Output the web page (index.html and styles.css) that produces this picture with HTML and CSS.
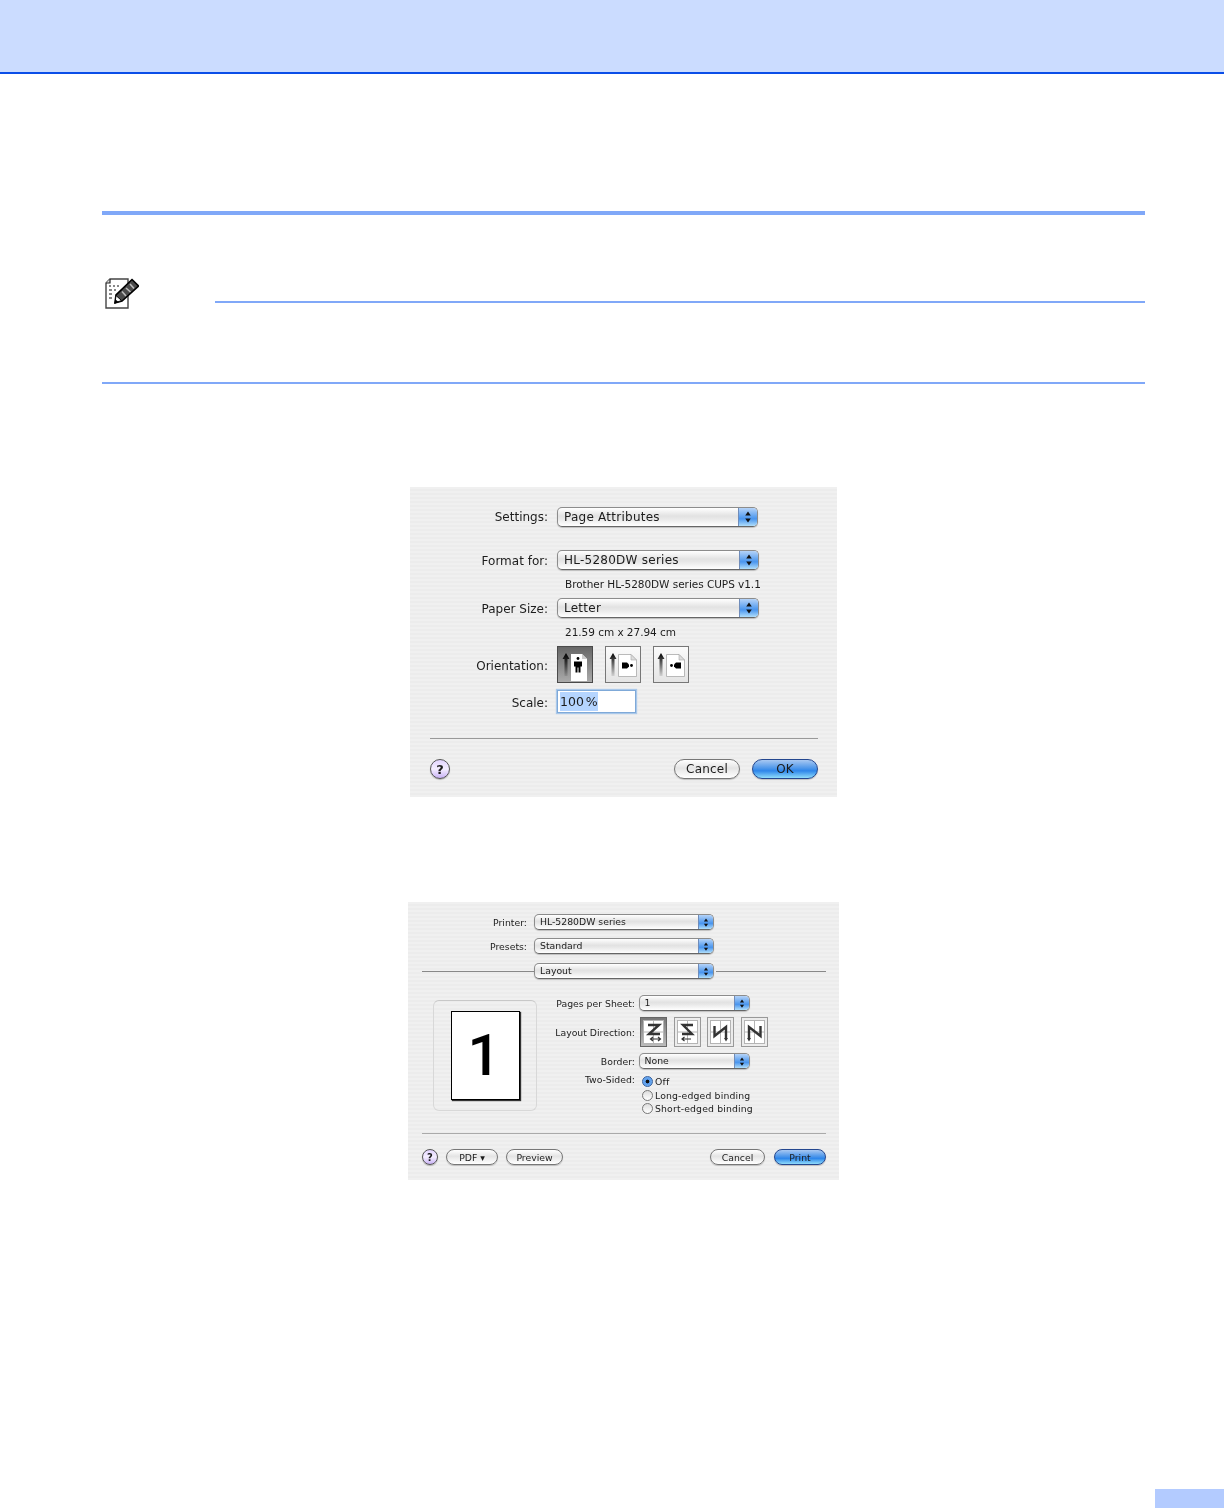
FILE: index.html
```html
<!DOCTYPE html>
<html lang="en">
<head>
  <meta charset="UTF-8" />
  <title>Page Setup and Print</title>
  <link rel="stylesheet" href="styles.css">
</head>
<body>
  <svg class="defs" width="0" height="0">
    <defs>
      <linearGradient id="fadeUp" x1="0" y1="0" x2="0" y2="1">
        <stop offset="0" stop-color="#000" />
        <stop offset="1" stop-color="#000" stop-opacity="0.1" />
      </linearGradient>
      <symbol id="updown" viewBox="0 0 8 14">
        <path d="M4 1.5 L6.8 5.5 H1.2 Z M4 12.5 L1.2 8.5 H6.8 Z" fill="#111" />
      </symbol>
      <symbol id="sheet" viewBox="0 0 36 37">
        <path d="M13.5 8.5 H26 L31.5 14 V30.5 H13.5 Z" fill="#fff" stroke="#aaa" stroke-width="0.8" />
        <path d="M26 8.5 V14 H31.5 Z" fill="#ddd" stroke="#aaa" stroke-width="0.6" />
      </symbol>
      <symbol id="panes" viewBox="0 0 27 30">
        <rect x="3.5" y="3.5" width="20" height="23" fill="#fff" stroke="#b4b4b4" />
        <path d="M3.5 15 H23.5 M13.5 3.5 V26.5" stroke="#b4b4b4" fill="none" />
      </symbol>
    </defs>
  </svg>

  <header class="top-band"></header>

  <main class="content">
    <div class="rule-thick"></div>

    <section class="note">
      <div class="note-head">
        <svg class="note-icon" width="34" height="31" viewBox="0 0 34 31">
          <path d="M5 1 H23 V30 H1 V5 Z" fill="#fff" stroke="#444" stroke-width="1.4" />
          <path d="M1 5 H5 V1" fill="#ddd" stroke="#222" stroke-width="1.2" />
          <path d="M4 7h2v2H4z M8 7h2v2H8z M12 7h2v2h-2z M4 11h3v2H4z M9 11h2v2H9z M4 15h3v2H4z M4 19h3v2H4z" fill="#888" />
          <path d="M27 1.5 L33.5 8 L17 23 L10 25 L11 17 Z" fill="#4a4a4a" stroke="#000" stroke-width="1.6" />
          <path d="M25 6 L29 10.5 M21 10 L25.5 14 M17 13.5 L21 18" stroke="#bbb" stroke-width="1.6" />
          <path d="M10 25 L11 17.5 L16.5 22.5 Z" fill="#fff" stroke="#000" />
          <path d="M9.5 25.5 L10.5 21.5 L13.5 24 Z" fill="#000" />
        </svg>
        <div class="note-line"></div>
      </div>
      <div class="note-end"></div>
    </section>

    <section class="dialog page-setup">
      <div class="row">
        <label class="field-label first">Settings:</label>
        <div class="select select-short"><span class="select-text">Page Attributes</span><span class="select-arrows"><svg width="8" height="14"><use href="#updown" /></svg></span></div>
      </div>
      <div class="row row-gap">
        <label class="field-label">Format for:</label>
        <div class="select"><span class="select-text">HL-5280DW series</span><span class="select-arrows"><svg width="8" height="14"><use href="#updown" /></svg></span></div>
      </div>
      <p class="sub">Brother HL-5280DW series CUPS v1.1</p>
      <div class="row">
        <label class="field-label">Paper Size:</label>
        <div class="select"><span class="select-text">Letter</span><span class="select-arrows"><svg width="8" height="14"><use href="#updown" /></svg></span></div>
      </div>
      <p class="sub">21.59 cm x 27.94 cm</p>
      <div class="row row-tall">
        <label class="field-label">Orientation:</label>
        <div class="icon-group">
          <div class="orient selected">
            <svg width="36" height="37" viewBox="0 0 36 37">
              <path d="M9 7 L12.5 13 H10.5 V30 H7.5 V13 H5.5 Z" fill="url(#fadeUp)" />
              <path d="M14 8 H25 L30 13 V35 H14 Z" fill="#fff" />
              <path d="M25 8 V13 H30 Z" fill="#ccc" />
              <g transform="translate(-2 -1.5)">
                <circle cx="23" cy="14" r="1.4" fill="#000" />
                <path d="M19 17 H27 V22 H25.5 V28 H23.5 V23 H22.5 V28 H20.5 V22 H19 Z" fill="#000" />
              </g>
            </svg>
          </div>
          <div class="orient">
            <svg width="36" height="37" viewBox="0 0 36 37">
              <path d="M8 7 L11.5 13 H9.5 V30 H6.5 V13 H4.5 Z" fill="url(#fadeUp)" />
              <use href="#sheet" />
              <path d="M17 16.5 H22 L24 18.5 V20.5 L22 22.5 H17 Z" fill="#000" />
              <circle cx="26.5" cy="19.5" r="1.4" fill="#000" />
            </svg>
          </div>
          <div class="orient">
            <svg width="36" height="37" viewBox="0 0 36 37">
              <path d="M8 7 L11.5 13 H9.5 V30 H6.5 V13 H4.5 Z" fill="url(#fadeUp)" />
              <use href="#sheet" />
              <path d="M28 16.5 H23 L21 18.5 V20.5 L23 22.5 H28 Z" fill="#000" />
              <circle cx="18.5" cy="19.5" r="1.4" fill="#000" />
            </svg>
          </div>
        </div>
      </div>
      <div class="row row-scale row-tall">
        <label class="field-label">Scale:</label>
        <div class="text-input"><span class="selection">100 %</span></div>
      </div>
      <div class="separator"></div>
      <div class="actions">
        <button class="help">?</button>
        <button class="pill push-right">Cancel</button>
        <button class="pill primary">OK</button>
      </div>
    </section>

    <section class="dialog print">
      <div class="row">
        <label class="field-label">Printer:</label>
        <div class="select"><span class="select-text">HL-5280DW series</span><span class="select-arrows"><svg width="6" height="11"><use href="#updown" /></svg></span></div>
      </div>
      <div class="row row-presets">
        <label class="field-label">Presets:</label>
        <div class="select"><span class="select-text">Standard</span><span class="select-arrows"><svg width="6" height="11"><use href="#updown" /></svg></span></div>
      </div>
      <div class="layout-bar">
        <div class="bar-line bar-left"></div>
        <div class="select"><span class="select-text">Layout</span><span class="select-arrows"><svg width="6" height="11"><use href="#updown" /></svg></span></div>
        <div class="bar-line"></div>
      </div>
      <div class="layout-body">
        <div class="preview-box">
          <div class="preview-page">1</div>
        </div>
        <div class="options">
          <div class="opt-row">
            <label class="opt-label">Pages per Sheet:</label>
            <div class="select"><span class="select-text">1</span><span class="select-arrows"><svg width="6" height="11"><use href="#updown" /></svg></span></div>
          </div>
          <div class="opt-row opt-gap">
            <label class="opt-label">Layout Direction:</label>
            <div class="dir-group">
              <div class="dir selected">
                <svg width="27" height="30" viewBox="0 0 27 30">
                  <use href="#panes" />
                  <path d="M8 8 H19 L9 17 H20" fill="none" stroke="#333" stroke-width="2.4" />
                  <path d="M11 22 H20 M18 20 L20.5 22 L18 24 M13 20 L10.5 22 L13 24" fill="none" stroke="#333" stroke-width="1.2" />
                </svg>
              </div>
              <div class="dir">
                <svg width="27" height="30" viewBox="0 0 27 30">
                  <use href="#panes" />
                  <path d="M19 8 H9 L18 17 H8" fill="none" stroke="#333" stroke-width="2.4" />
                  <path d="M8 22 H17 M10.5 20 L8 22 L10.5 24" fill="none" stroke="#333" stroke-width="1.2" />
                </svg>
              </div>
              <div class="dir">
                <svg width="27" height="30" viewBox="0 0 27 30">
                  <use href="#panes" />
                  <path d="M7.5 9 V19 L19 10 V21" fill="none" stroke="#333" stroke-width="2.4" />
                  <path d="M17 21 L19 24.5 L21 21 Z" fill="#333" />
                </svg>
              </div>
              <div class="dir">
                <svg width="27" height="30" viewBox="0 0 27 30">
                  <use href="#panes" />
                  <path d="M8 21 V10 L19.5 19 V9" fill="none" stroke="#333" stroke-width="2.4" />
                  <path d="M6 21 L8 24.5 L10 21 Z" fill="#333" />
                </svg>
              </div>
            </div>
          </div>
          <div class="opt-row opt-gap">
            <label class="opt-label">Border:</label>
            <div class="select"><span class="select-text">None</span><span class="select-arrows"><svg width="6" height="11"><use href="#updown" /></svg></span></div>
          </div>
          <div class="opt-row opt-radios">
            <label class="opt-label">Two-Sided:</label>
            <div class="radios">
              <div class="radio-row"><span class="radio on"></span>Off</div>
              <div class="radio-row"><span class="radio"></span>Long-edged binding</div>
              <div class="radio-row"><span class="radio"></span>Short-edged binding</div>
            </div>
          </div>
        </div>
      </div>
      <div class="separator"></div>
      <div class="actions">
        <button class="help">?</button>
        <button class="pill pdf">PDF ▾</button>
        <button class="pill preview">Preview</button>
        <button class="pill cancel push-right">Cancel</button>
        <button class="pill primary">Print</button>
      </div>
    </section>
  </main>

  <footer class="page-tab"></footer>
</body>
</html>
```
FILE: styles.css
```css
body {
  font-family: "DejaVu Sans", sans-serif;
  color: #1c1c1c;
  background: #fff;
  margin: 0;
  height: 1508px;
  display: flex;
  flex-direction: column;
  overflow: hidden;
}
.defs {
  display: block;
  height: 0;
}
.top-band {
  height: 72px;
  flex: none;
  background: #cbdcff;
  border-bottom: 2px solid #0a4ee8;
}
.content {
  margin: 0 79px 0 102px;
}
.rule-thick {
  height: 4px;
  margin-top: 137px;
  background: #80a8f8;
}
.note {
  margin-top: 63px;
}
.note-head {
  display: flex;
  align-items: flex-start;
  height: 102px;
  padding-left: 3px;
}
.note-icon {
  flex: none;
  display: block;
}
.note-line {
  flex: 1;
  height: 2px;
  margin: 23px 0 0 76px;
  background: #80a8f8;
}
.note-end {
  height: 2px;
  margin-top: 2px;
  background: #80a8f8;
}

/* dialogs */
.dialog {
  background: repeating-linear-gradient(#f0f0f0 0, #f0f0f0 2px, #ececec 2px, #ececec 4px);
  box-sizing: border-box;
  filter: blur(0.3px);
}
.page-setup {
  width: 427px;
  height: 310px;
  margin: 103px 0 0 308px;
  padding-top: 20px;
  font-size: 12px;
}
.print {
  width: 431px;
  height: 278px;
  margin: 105px 0 0 306px;
  padding-top: 12px;
  font-size: 9.3px;
}
.row {
  display: flex;
  align-items: center;
  margin-top: 7px;
}
.row:first-child {
  margin-top: 0;
}
.page-setup .row-gap {
  margin-top: 23px;
}
.page-setup .row-scale {
  margin-top: 8px;
}
.field-label {
  text-align: right;
  flex: none;
}
.page-setup .field-label {
  width: 138px;
  margin-right: 9px;
  padding-top: 1px;
}
.page-setup .field-label.first {
  padding-top: 0;
  padding-bottom: 1px;
}
.page-setup .row-tall .field-label {
  padding-top: 3px;
}
.print .field-label {
  width: 119px;
  margin-right: 7px;
}
.sub {
  margin: 7px 0 0 155px;
  font-size: 10.5px;
  line-height: 14px;
  white-space: nowrap;
  letter-spacing: -0.04px;
}

/* popup */
.select {
  display: flex;
  box-sizing: border-box;
  flex: none;
  border: 1px solid #8c8c8c;
  border-bottom-color: #666;
  border-radius: 5px;
  background: linear-gradient(#fff, #e2e2e2 45%, #e8e8e8 60%, #fff);
  overflow: hidden;
  box-shadow: 0 1px 1px rgba(0,0,0,0.2);
}
.page-setup .select {
  width: 202px;
  height: 20px;
  line-height: 18px;
  letter-spacing: 0.25px;
}
.page-setup .select-short {
  width: 201px;
}
.print .select {
  width: 180px;
  height: 16px;
  line-height: 14px;
}
.print .options .select {
  width: 111px;
  margin-left: -0.5px;
}
.select-text {
  flex: 1;
  white-space: nowrap;
}
.page-setup .select-text {
  padding-left: 6px;
}
.print .select-text {
  padding-left: 5px;
}
.select-arrows {
  display: flex;
  align-items: center;
  justify-content: center;
  background: linear-gradient(#b5d3f8, #5a9fef 50%, #4a95ee 60%, #b0defa);
  border-left: 1px solid #6f8cba;
}
.page-setup .select-arrows {
  width: 18px;
}
.print .select-arrows {
  width: 14px;
}

/* orientation */
.icon-group {
  display: flex;
  gap: 12px;
}
.orient {
  width: 36px;
  height: 37px;
  box-sizing: border-box;
  border: 1px solid #777;
  background: linear-gradient(#fbfbfb, #e4e4e4);
  overflow: hidden;
}
.orient svg {
  display: block;
  margin: -1px;
}
.orient.selected {
  border-color: #4a4a4a;
  background: linear-gradient(#666, #aaa);
}
.text-input {
  width: 77px;
  height: 21px;
  margin-left: 1px;
  box-sizing: border-box;
  padding-left: 2px;
  background: #fff;
  line-height: 22px;
  font-size: 12.5px;
  word-spacing: -2px;
  box-shadow: 0 0 0 1px #7fa9d8, 0 0 1px 2px #a9c8ea;
}
.selection {
  display: inline-block;
  background: #b5d5ff;
  line-height: 19px;
  white-space: nowrap;
}
.separator {
  height: 1px;
  background: #999;
}
.page-setup .separator {
  margin: 26px 19px 0 20px;
}
.print .separator {
  margin: 17.5px 13px 0 14px;
  background: #aaa;
}

/* buttons */
.actions {
  display: flex;
  align-items: center;
}
.page-setup .actions {
  margin: 20px 19px 0 20px;
}
.print .actions {
  margin: 15px 13px 0 14px;
}
button {
  font-family: "DejaVu Sans", sans-serif;
  color: #1c1c1c;
  padding: 0;
  cursor: pointer;
}
.help {
  border: 1px solid #555;
  border-radius: 50%;
  background: linear-gradient(#e2d4ff, #f4eeff 50%, #c9b2f5);
  font-weight: bold;
  box-shadow: 0 1px 1px rgba(0,0,0,0.25);
}
.page-setup .help {
  width: 20px;
  height: 20px;
  font-size: 13px;
}
.print .help {
  width: 16px;
  height: 16px;
  font-size: 10px;
}
.pill {
  border: 1px solid #777;
  border-radius: 10px;
  background: linear-gradient(#fff, #e4e4e4 45%, #ececec 60%, #fff);
  box-shadow: 0 1px 1px rgba(0,0,0,0.2);
}
.page-setup .pill {
  width: 66px;
  height: 20px;
  font-size: 12px;
  letter-spacing: 0.2px;
}
.page-setup .primary {
  margin-left: 12px;
}
.print .pill {
  height: 16px;
  font-size: 9.3px;
}
.primary {
  border-color: #24478f;
  background: linear-gradient(#a8c8f2, #4e97ea 45%, #2e86ea 60%, #8fdcfb);
}
.push-right {
  margin-left: auto;
}
.pdf {
  width: 52px;
  margin-left: 8px;
}
.preview {
  width: 57px;
  margin-left: 8px;
}
.print .cancel {
  width: 55px;
}
.print .primary {
  width: 52px;
  margin-left: 9px;
}

/* print dialog */
.row-presets {
  margin-top: 8px;
}
.layout-bar {
  display: flex;
  align-items: center;
  margin: 9px 13px 0 14px;
}
.bar-line {
  flex: 1;
  height: 1px;
  background: #888;
}
.bar-line.bar-left {
  flex: none;
  width: 112px;
}
.layout-bar .select + .bar-line {
  margin-left: 2px;
}
.layout-body {
  display: flex;
  margin: 16px 0 0 25px;
}
.preview-box {
  width: 104px;
  height: 111px;
  margin-top: 5px;
  box-sizing: border-box;
  padding: 10px 0 0 17px;
  border: 1px solid #d8d8d8;
  border-top-color: #c8c8c8;
  border-radius: 6px;
}
.preview-page {
  width: 69px;
  height: 89px;
  box-sizing: border-box;
  border: 1px solid #000;
  background: #fff;
  color: #000;
  box-shadow: 1px 1px 1px #333;
  font-family: Roboto, sans-serif;
  font-weight: 500;
  font-size: 58px;
  line-height: 87px;
  text-align: center;
  padding-right: 3px;
}
.opt-row {
  display: flex;
}
.opt-gap {
  margin-top: 6px;
  align-items: center;
}
.opt-radios {
  margin-top: 5.5px;
}
.opt-label {
  width: 98px;
  margin-right: 4px;
  flex: none;
  text-align: right;
  white-space: nowrap;
}
.opt-row:first-child {
  align-items: center;
}
.opt-radios .opt-label {
  line-height: 10px;
}
.dir-group {
  display: flex;
  gap: 6.6px;
  margin-left: 1px;
}
.dir {
  width: 27px;
  height: 30px;
  box-sizing: border-box;
  border: 1px solid #999;
  background: #ececec;
  overflow: hidden;
}
.dir svg {
  display: block;
  margin: -1px;
}
.dir.selected {
  border-color: #666;
  background: linear-gradient(#777, #bbb);
}
.radios {
  margin-left: 3px;
  letter-spacing: 0.15px;
}
.radio-row {
  display: flex;
  align-items: center;
  height: 13.7px;
  white-space: nowrap;
}
.radio {
  width: 11px;
  height: 11px;
  margin-right: 2px;
  box-sizing: border-box;
  border: 1px solid #777;
  border-radius: 50%;
  background: linear-gradient(#ddd, #fff);
}
.radio.on {
  border-color: #35609f;
  background: radial-gradient(circle, #111 0, #111 1.6px, #5a9cec 2.2px, #7db6f2 100%);
}

.page-tab {
  flex: none;
  align-self: flex-end;
  width: 69px;
  height: 19px;
  margin-top: auto;
  background: #b3cbff;
}
```
